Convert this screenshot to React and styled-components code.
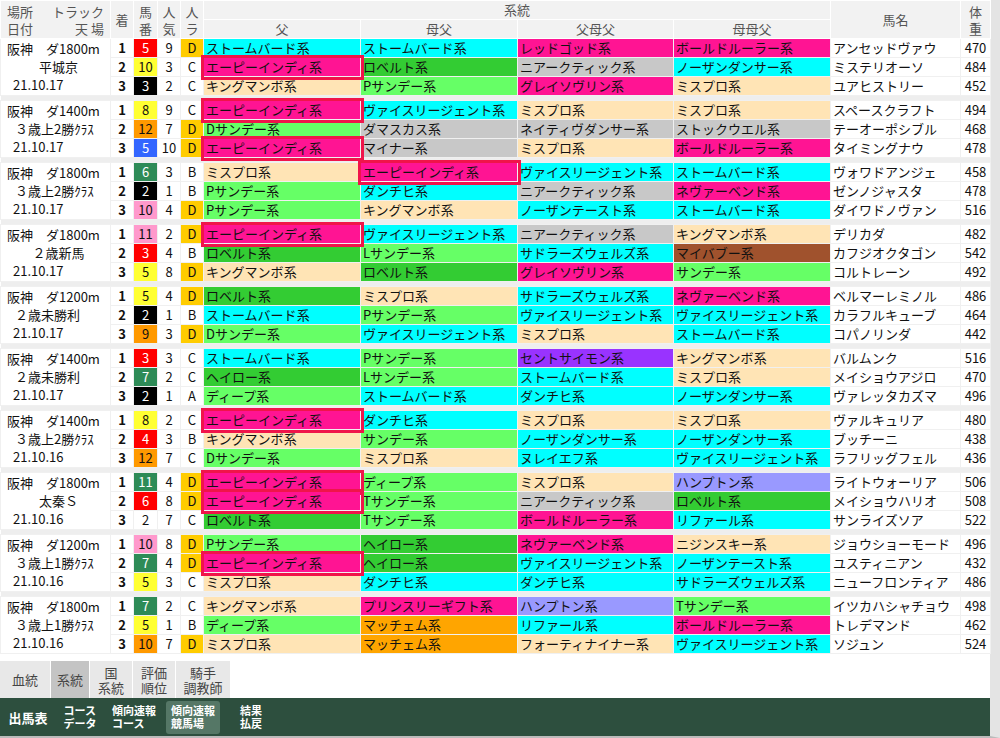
import React from 'react'
import styled, { createGlobalStyle } from 'styled-components'

const GlobalStyle = createGlobalStyle`
  html, body { margin: 0; padding: 0; background: #fff; }
  body { font-family: "Noto Sans CJK JP", "Noto Sans", sans-serif; color: #111; }
`

const LINE = {
  cyan: ['ストームバード', 'ヴァイスリージェント', 'ノーザンダンサー', 'ダンチヒ', 'ノーザンテースト', 'サドラーズウェルズ', 'ヌレイエフ', 'リファール'],
  pink: ['エーピーインディ', 'レッドゴッド', 'ボールドルーラー', 'グレイソヴリン', 'ネヴァーベンド', 'プリンスリーギフト'],
  dgreen: ['ロベルト', 'ヘイロー'],
  lgreen: ['Pサンデー', 'Dサンデー', 'Lサンデー', 'Tサンデー', 'サンデー', 'ディープ'],
  peach: ['ミスプロ', 'キングマンボ', 'ニジンスキー', 'フォーティナイナー'],
  gray: ['ニアークティック', 'ダマスカス', 'マイナー', 'ネイティヴダンサー', 'ストックウエル'],
  purple: ['セントサイモン'],
  lav: ['ハンプトン'],
  orange: ['マッチェム'],
  brown: ['マイバブー'],
}
const LINE_BG = {
  cyan: '#00ffff', pink: '#ff1493', dgreen: '#33cc33', lgreen: '#66ff66', peach: '#ffe4b5',
  gray: '#c8c8c8', purple: '#9933ff', lav: '#9999ff', orange: '#ffa500', brown: '#a0522d',
}
const lineColor = (n) => {
  for (const k in LINE) if (LINE[k].includes(n)) return LINE_BG[k]
  return '#fff'
}

const WAKU = {
  r: ['#ff0000', '#fff'], y: ['#ffff33', '#111'], k: ['#000', '#fff'], o: ['#ff9900', '#111'],
  b: ['#3366ff', '#fff'], g: ['#2e8b57', '#fff'], p: ['#ff99cc', '#111'], w: ['#fff', '#111'],
}

const races = [
  { place: '阪神　ダ1800m', cls: '平城京', date: '21.10.17', rows: [
    [5, 'r', 9, 'D', 'ストームバード', 'ストームバード', 'レッドゴッド', 'ボールドルーラー', 'アンセッドヴァウ', 470],
    [10, 'y', 3, 'C', '*エーピーインディ', 'ロベルト', 'ニアークティック', 'ノーザンダンサー', 'ミステリオーソ', 484],
    [3, 'k', 2, 'C', 'キングマンボ', 'Pサンデー', 'グレイソヴリン', 'ミスプロ', 'ユアヒストリー', 452],
  ] },
  { place: '阪神　ダ1400m', cls: '３歳上2勝ｸﾗｽ', date: '21.10.17', rows: [
    [8, 'y', 9, 'C', '*エーピーインディ', 'ヴァイスリージェント', 'ミスプロ', 'ミスプロ', 'スペースクラフト', 494],
    [12, 'o', 7, 'D', 'Dサンデー', 'ダマスカス', 'ネイティヴダンサー', 'ストックウエル', 'テーオーポシブル', 468],
    [5, 'b', 10, 'D', '*エーピーインディ', 'マイナー', 'ミスプロ', 'ボールドルーラー', 'タイミングナウ', 478],
  ] },
  { place: '阪神　ダ1800m', cls: '３歳上2勝ｸﾗｽ', date: '21.10.17', rows: [
    [6, 'g', 3, 'B', 'ミスプロ', '*エーピーインディ', 'ヴァイスリージェント', 'ストームバード', 'ヴォワドアンジェ', 458],
    [2, 'k', 1, 'B', 'Pサンデー', 'ダンチヒ', 'ニアークティック', 'ネヴァーベンド', 'ゼンノジャスタ', 478],
    [10, 'p', 4, 'D', 'Pサンデー', 'キングマンボ', 'ノーザンテースト', 'ストームバード', 'ダイワドノヴァン', 516],
  ] },
  { place: '阪神　ダ1800m', cls: '２歳新馬', date: '21.10.17', rows: [
    [11, 'p', 2, 'D', '*エーピーインディ', 'ヴァイスリージェント', 'ニアークティック', 'キングマンボ', 'デリカダ', 482],
    [3, 'r', 4, 'B', 'ロベルト', 'Lサンデー', 'サドラーズウェルズ', 'マイバブー', 'カフジオクタゴン', 542],
    [5, 'y', 8, 'D', 'キングマンボ', 'ロベルト', 'グレイソヴリン', 'サンデー', 'コルトレーン', 492],
  ] },
  { place: '阪神　ダ1200m', cls: '２歳未勝利', date: '21.10.17', rows: [
    [5, 'y', 4, 'D', 'ロベルト', 'ミスプロ', 'サドラーズウェルズ', 'ネヴァーベンド', 'ベルマーレミノル', 486],
    [2, 'k', 1, 'B', 'ストームバード', 'Pサンデー', 'ヴァイスリージェント', 'ヴァイスリージェント', 'カラフルキューブ', 464],
    [9, 'o', 3, 'D', 'Dサンデー', 'ヴァイスリージェント', 'ミスプロ', 'ストームバード', 'コパノリンダ', 442],
  ] },
  { place: '阪神　ダ1400m', cls: '２歳未勝利', date: '21.10.17', rows: [
    [3, 'r', 3, 'C', 'ストームバード', 'Pサンデー', 'セントサイモン', 'キングマンボ', 'バルムンク', 516],
    [7, 'g', 2, 'C', 'ヘイロー', 'Lサンデー', 'ストームバード', 'ミスプロ', 'メイショウアジロ', 470],
    [2, 'k', 1, 'A', 'ディープ', 'ストームバード', 'ダンチヒ', 'ノーザンダンサー', 'ヴァレッタカズマ', 496],
  ] },
  { place: '阪神　ダ1400m', cls: '３歳上2勝ｸﾗｽ', date: '21.10.16', rows: [
    [8, 'y', 2, 'C', '*エーピーインディ', 'ダンチヒ', 'ミスプロ', 'ミスプロ', 'ヴァルキュリア', 480],
    [4, 'r', 3, 'B', 'キングマンボ', 'サンデー', 'ノーザンダンサー', 'ノーザンダンサー', 'ブッチーニ', 438],
    [12, 'o', 7, 'C', 'Dサンデー', 'ミスプロ', 'ヌレイエフ', 'ヴァイスリージェント', 'ラフリッグフェル', 436],
  ] },
  { place: '阪神　ダ1800m', cls: '太秦Ｓ', date: '21.10.16', rows: [
    [11, 'g', 4, 'D', '*エーピーインディ', 'ディープ', 'ミスプロ', 'ハンプトン', 'ライトウォーリア', 506],
    [6, 'r', 8, 'D', '*エーピーインディ', 'Tサンデー', 'ニアークティック', 'ロベルト', 'メイショウハリオ', 508],
    [2, 'w', 7, 'C', 'ロベルト', 'Tサンデー', 'ボールドルーラー', 'リファール', 'サンライズソア', 522],
  ] },
  { place: '阪神　ダ1200m', cls: '３歳上1勝ｸﾗｽ', date: '21.10.16', rows: [
    [10, 'p', 8, 'D', 'Pサンデー', 'ヘイロー', 'ネヴァーベンド', 'ニジンスキー', 'ジョウショーモード', 496],
    [7, 'g', 4, 'D', '*エーピーインディ', 'ヘイロー', 'ヴァイスリージェント', 'ノーザンテースト', 'ユスティニアン', 432],
    [5, 'y', 3, 'C', 'ミスプロ', 'ダンチヒ', 'ダンチヒ', 'サドラーズウェルズ', 'ニューフロンティア', 486],
  ] },
  { place: '阪神　ダ1800m', cls: '３歳上1勝ｸﾗｽ', date: '21.10.16', rows: [
    [7, 'g', 2, 'C', 'キングマンボ', 'プリンスリーギフト', 'ハンプトン', 'Tサンデー', 'イツカハシャチョウ', 498],
    [5, 'y', 1, 'B', 'ディープ', 'マッチェム', 'リファール', 'ボールドルーラー', 'トレデマンド', 462],
    [10, 'o', 7, 'D', 'ミスプロ', 'マッチェム', 'フォーティナイナー', 'ヴァイスリージェント', 'ソジュン', 524],
  ] },
]

const Page = styled.div`
  width: 990px;
  height: 736px;
  border-right: 10px solid #e4e4e4;
  display: flex;
  flex-direction: column;
  border-bottom: 2px solid #bbb;
`

const Table = styled.table`
  border-collapse: collapse;
  table-layout: fixed;
  width: 990px;
  font-size: 13px;
  line-height: 18px;
`

const Th = styled.th`
  background: #f2f2f2;
  color: #555;
  font-weight: normal;
  border: 1px solid #fff;
  height: 18px;
  padding: 0;
  line-height: ${(p) => (p.$tight ? '17px' : '18px')};
  text-align: ${(p) => p.$align || 'center'};
`

const Td = styled.td`
  height: 18px;
  padding: 0 0 0 ${(p) => (p.$pad ? '2px' : '0')};
  border: 1px solid #f0f0f0;
  background: ${(p) => p.$bg || '#fff'};
  color: ${(p) => p.$fg || '#111'};
  text-align: ${(p) => p.$align || 'left'};
  font-weight: ${(p) => (p.$bold ? 'bold' : 'normal')};
  white-space: nowrap;
  overflow: visible;
  ${(p) => p.$hl && 'outline: 3px solid #f0144a; outline-offset: 0; position: relative; z-index: 1;'}
`

const PlaceCell = styled.td`
  border: 1px solid #f0f0f0;
  padding: 0 0 0 6px;
  vertical-align: middle;
  font-size: 13px;
  line-height: 18px;
`

const PlaceLine = styled.div`
  text-align: ${(p) => p.$align || 'left'};
  padding-left: ${(p) => p.$indent || 0}px;
`

const HeadSplit = styled.div`
  display: flex;
  justify-content: space-between;
  padding: 0 6px;
  span:last-child { text-align: right; }
`

const SepRow = styled.tr`
  td { height: 4px; background: #eeeeee; padding: 0; border: 0; }
`

const Tabs = styled.div`
  display: flex;
  height: 37px;
  margin-top: auto;
`

const Tab = styled.div`
  width: ${(p) => p.$w}px;
  background: ${(p) => (p.$on ? '#c4c4c4' : '#e8e8e8')};
  border-right: 1px solid #fff;
  color: #444;
  font-size: 13px;
  line-height: 15px;
  display: flex;
  align-items: center;
  justify-content: center;
  text-align: center;
`

const Bar = styled.div`
  height: 38px;
  background: #2d4f3e;
  display: flex;
  align-items: center;
  padding-left: 4px;
  gap: 6px;
`

const BarItem = styled.div`
  color: #fff;
  font-weight: bold;
  font-size: ${(p) => (p.$big ? '13px' : '11px')};
  line-height: 13px;
  width: ${(p) => p.$w}px;
  height: 33px;
  display: flex;
  align-items: center;
  justify-content: center;
  border-radius: 3px;
  background: ${(p) => (p.$on ? '#557766' : 'transparent')};
  text-align: left;
  white-space: nowrap;
`

function LineCell({ v }) {
  const hl = v.startsWith('*')
  const name = hl ? v.slice(1) : v
  return (
    <Td $pad $bg={lineColor(name)} $hl={hl}>
      {name}系
    </Td>
  )
}

function Race({ race, last }) {
  return (
    <>
      {race.rows.map((r, i) => {
        const [bg, fg] = WAKU[r[1]]
        return (
          <tr key={i}>
            {i === 0 && (
              <PlaceCell rowSpan={3}>
                <PlaceLine>{race.place}</PlaceLine>
                <PlaceLine $indent={race.cls.length > 4 ? 8 : 0} $align={race.cls.length > 4 ? 'left' : 'center'}>
                  {race.cls}
                </PlaceLine>
                <PlaceLine $indent={6}>{race.date}</PlaceLine>
              </PlaceCell>
            )}
            <Td $align="center" $bold>{i + 1}</Td>
            <Td $align="center" $bg={bg} $fg={fg}>{r[0]}</Td>
            <Td $align="center">{r[2]}</Td>
            <Td $align="center" $bg={r[3] === 'D' ? '#ffcc00' : '#fff'}>{r[3]}</Td>
            <LineCell v={r[4]} />
            <LineCell v={r[5]} />
            <LineCell v={r[6]} />
            <LineCell v={r[7]} />
            <Td $pad>{r[8]}</Td>
            <Td $align="center">{r[9]}</Td>
          </tr>
        )
      })}
      {!last && (
        <SepRow>
          <td colSpan={11} />
        </SepRow>
      )}
    </>
  )
}

export default function App() {
  return (
    <Page>
      <GlobalStyle />
      <Table>
        <colgroup>
          {[110, 23, 24, 23, 23, 157, 157, 156, 157, 130, 30].map((w, i) => (
            <col key={i} style={{ width: w }} />
          ))}
        </colgroup>
        <thead>
          <tr>
            <Th rowSpan={2} $tight>
              <HeadSplit>
                <span>場所<br />日付</span>
                <span>トラック<br />天 場</span>
              </HeadSplit>
            </Th>
            <Th rowSpan={2}>着</Th>
            <Th rowSpan={2} $tight>馬<br />番</Th>
            <Th rowSpan={2} $tight>人<br />気</Th>
            <Th rowSpan={2} $tight>人<br />ラ</Th>
            <Th colSpan={4}>系統</Th>
            <Th rowSpan={2}>馬名</Th>
            <Th rowSpan={2} $tight>体<br />重</Th>
          </tr>
          <tr>
            <Th>父</Th>
            <Th>母父</Th>
            <Th>父母父</Th>
            <Th>母母父</Th>
          </tr>
        </thead>
        <tbody>
          {races.map((r, i) => (
            <Race key={i} race={r} last={i === races.length - 1} />
          ))}
        </tbody>
      </Table>
      <Tabs>
        <Tab $w={50}>血統</Tab>
        <Tab $w={38} $on>系統</Tab>
        <Tab $w={42}>国<br />系統</Tab>
        <Tab $w={42}>評価<br />順位</Tab>
        <Tab $w={54}>騎手<br />調教師</Tab>
      </Tabs>
      <Bar>
        <BarItem $w={48} $big>出馬表</BarItem>
        <BarItem $w={44}>コース<br />データ</BarItem>
        <BarItem $w={52}>傾向速報<br />コース</BarItem>
        <BarItem $w={54} $on>傾向速報<br />競馬場</BarItem>
        <BarItem $w={50}>結果<br />払戻</BarItem>
      </Bar>
    </Page>
  )
}
